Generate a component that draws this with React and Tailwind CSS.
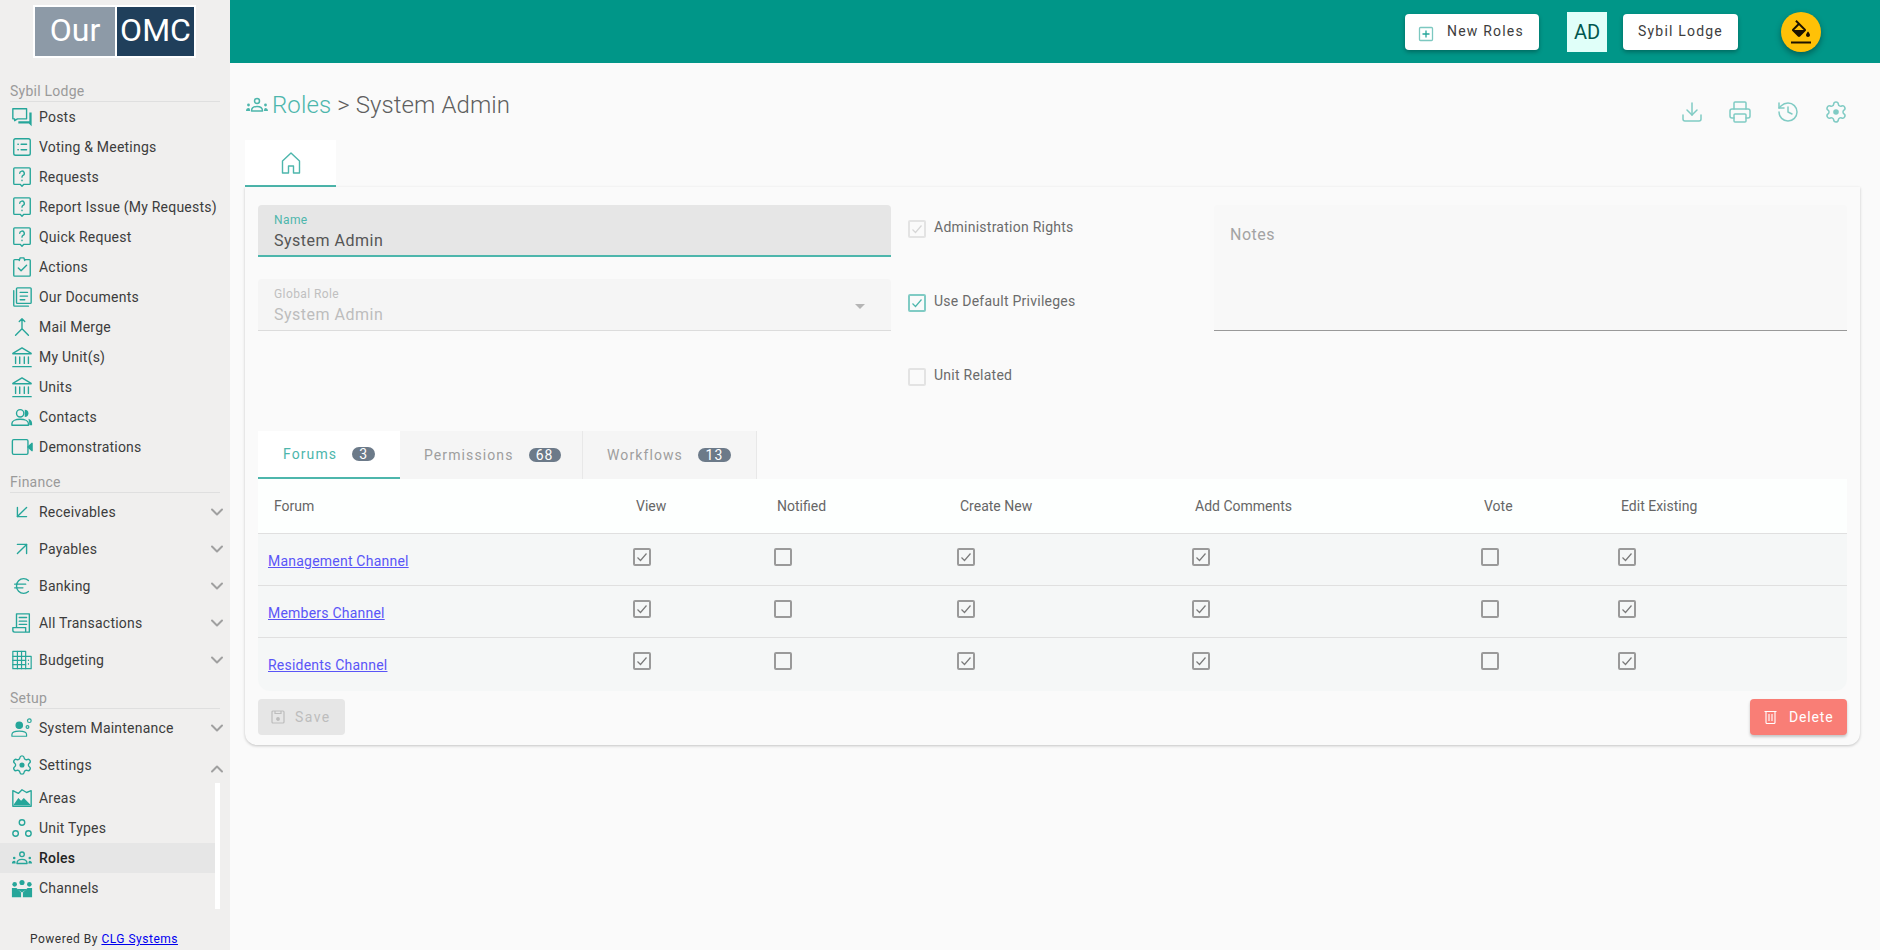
import React from "react";
import { ArrowDownLeft, ArrowUpRight, Euro, ChevronDown, ChevronUp, Download, Printer, History } from "lucide-react";

const S = ({ children, size = 22, sw = 1.5, className = "text-[#26a69a]" }) => (
  <svg width={size} height={size} viewBox="0 0 24 24" fill="none" stroke="currentColor" strokeWidth={sw} strokeLinecap="round" strokeLinejoin="round" className={className}>
    {children}
  </svg>
);

const Posts = () => (
  <S>
    <path d="M2 3h15v11H7l-3 2v-2H2z" />
    <path d="M20 7h2.500v15l-3-3H8v-2.500h12z" fill="currentColor" stroke="none" />
  </S>
);
const Voting = () => (
  <S>
    <rect x="3" y="3" width="18" height="18" rx="2" />
    <path d="M7.500 9h.5M7.500 15h.5M11 9h6M11 15h6" />
  </S>
);
const Ques = () => (
  <S>
    <path d="M4 2h16a1 1 0 0 1 1 1v16a1 1 0 0 1-1 1h-6l-2 2-2-2H4a1 1 0 0 1-1-1V3a1 1 0 0 1 1-1z" />
    <path d="M9.500 8a2.500 2.500 0 1 1 3.500 2.300c-.7.4-1 1-1 1.900M12 15.500v.5" />
  </S>
);
const Actions = () => (
  <S>
    <path d="M9 4H4a1 1 0 0 0-1 1v16a1 1 0 0 0 1 1h16a1 1 0 0 0 1-1V5a1 1 0 0 0-1-1h-5" />
    <path d="M9 5l1-3h4l1 3" />
    <path d="M8 13l3 3 6-6" />
  </S>
);
const Docs = () => (
  <S>
    <rect x="6" y="2" width="16" height="17" rx="1" />
    <path d="M3 5v16a1 1 0 0 0 1 1h15M10 7h8M10 11h8M10 15h5" />
  </S>
);
const Merge = () => (
  <S>
    <path d="M12 3v11M9 6l3-3 3 3M12 14l-7 7M12 14l7 7" />
  </S>
);
const Bank = () => (
  <S>
    <path d="M2 8l10-6 10 6M2 8.500h20M5 12v7M9.500 12v7M14.500 12v7M19 12v7M2 22.500h20" />
  </S>
);
const Contacts = () => (
  <S>
    <circle cx="10" cy="8" r="4" />
    <path d="M1 21v-2c0-2.500 3.500-4.500 9-4.500s9 2 9 4.500v2z" />
    <path d="M15 4a4 4 0 0 1 0 8z" fill="currentColor" stroke="none" />
    <path d="M19 14c2.500.7 4 2.500 4 5v2h-3c0-3-.500-5-1-7z" fill="currentColor" stroke="none" />
  </S>
);
const Video = () => (
  <S>
    <rect x="1.500" y="4" width="17" height="16" rx="1.500" />
    <path d="M18.500 12L23 8v8z" fill="currentColor" />
  </S>
);
const Receipt = () => (
  <S>
    <path d="M6 2h14v20H4a2 2 0 0 1-2-2v-3h14v5M9 6h8M9 10h8M9 13.500h8M6 2v15" />
  </S>
);
const Budget = () => (
  <S sw={1.3}>
    <rect x="2" y="2.500" width="14" height="19" />
    <path d="M16 8h6v13.500h-6M2 8h14M2 12.500h14M2 17h14M7 2.500v19M11.500 2.500v19M19 12v.5M19 16v.5" />
  </S>
);
const Maint = () => (
  <S sw={1.3}>
    <circle cx="9" cy="9" r="3.500" fill="currentColor" />
    <path d="M1 21v-2c0-2 3-3.500 8-3.500s8 1.500 8 3.500v2z" />
    <circle cx="20" cy="4" r="2" />
    <circle cx="18" cy="11" r="1.500" />
  </S>
);
const Gear = ({ size = 22, className, sw = 1.5 }) => (
  <S size={size} sw={sw} className={className}>
    <path d="M9.671 4.136a2.34 2.34 0 0 1 4.659 0 2.34 2.34 0 0 0 3.319 1.915 2.34 2.34 0 0 1 2.33 4.033 2.34 2.34 0 0 0 0 3.831 2.34 2.34 0 0 1-2.33 4.033 2.34 2.34 0 0 0-3.319 1.915 2.34 2.34 0 0 1-4.659 0 2.34 2.34 0 0 0-3.32-1.915 2.34 2.34 0 0 1-2.33-4.033 2.34 2.34 0 0 0 0-3.831A2.34 2.34 0 0 1 6.35 6.051a2.34 2.34 0 0 0 3.319-1.915" />
    <circle cx="12" cy="12" r="2.800" fill="currentColor" stroke="none" />
  </S>
);
const Area = () => (
  <S>
    <path d="M2 4l6 3 4-4 5 3 5-2v17H2z" />
    <path d="M3 19l5-7 3 3 3-3 7 7v1H3z" fill="currentColor" stroke="none" />
  </S>
);
const UnitTypes = () => (
  <S>
    <circle cx="12" cy="6" r="3" />
    <circle cx="5" cy="18" r="3" />
    <circle cx="19" cy="18" r="3" />
  </S>
);
const Roles = ({ size = 24, className }) => (
  <S size={size} sw={1.5} className={className}>
    <circle cx="12" cy="8" r="2.500" />
    <path d="M6.500 18c0-3 2-4.500 5.500-4.500s5.500 1.500 5.500 4.500z" />
    <circle cx="3.500" cy="12" r="1.400" fill="currentColor" stroke="none" />
    <circle cx="20.500" cy="12" r="1.400" fill="currentColor" stroke="none" />
    <path d="M1 18c0-2 1-3 2.500-3S5 16 5 18zM19 18c0-2 .5-3 1.500-3s2.500 1 2.500 3z" fill="currentColor" stroke="none" />
  </S>
);
const Channels = () => (
  <S>
    <g fill="currentColor" stroke="none">
      <circle cx="12" cy="6" r="2.800" />
      <circle cx="4" cy="8" r="2.500" />
      <circle cx="20" cy="8" r="2.500" />
      <path d="M7.500 13h9v1l-4.500 3-4.500-3z" />
      <path d="M1 12h5l5 5v5H1zM23 12h-5l-5 5v5h10z" />
    </g>
  </S>
);

const Item = ({ icon, label, active, caret, tall }) => (
  <div className={`flex items-center pl-[11px] relative ${tall ? "h-[37px] pt-[1px]" : "h-[30px]"} ${active ? "bg-[#e6e6e6] font-medium text-[#222]" : "text-[#3c3c3c]"}`}>
    <span className="w-[22px] h-[22px] flex items-center justify-center shrink-0">{icon}</span>
    <span className="ml-[6px] text-[14px] tracking-[0.22px] whitespace-nowrap">{label}</span>
    {caret === "down" && <ChevronDown size={20} strokeWidth={2.4} className="absolute left-[207px] top-[9px] text-[#a0a0a0]" />}
    {caret === "up" && <ChevronUp size={20} strokeWidth={2.4} className="absolute left-[207px] top-[13px] text-[#a0a0a0]" />}
  </div>
);

const Section = ({ title, className }) => (
  <div className={`mx-[10px] h-[21px] border-b border-[#dfdfdf] text-[14px] tracking-[0.25px] leading-[20px] text-[#9a9a9a] ${className}`}>{title}</div>
);

const Sidebar = () => (
  <aside className="w-[230px] shrink-0 bg-[#f0efee] flex flex-col h-[950px]">
    <div className="h-[63px] pt-[5px] pl-[33px]">
      <div className="w-[163px] h-[53px] bg-white p-[2px] flex gap-[2px]">
        <div className="w-[80px] bg-[#8d9aa7] text-white text-[32px] leading-[46px] text-center">Our</div>
        <div className="flex-1 bg-[#203f5b] text-white text-[32px] leading-[46px] text-center">OMC</div>
      </div>
    </div>
    <Section title="Sybil Lodge" className="mt-[18px]" />
    <Item icon={<Posts />} label="Posts" />
    <Item icon={<Voting />} label="Voting & Meetings" />
    <Item icon={<Ques />} label="Requests" />
    <Item icon={<Ques />} label="Report Issue (My Requests)" />
    <Item icon={<Ques />} label="Quick Request" />
    <Item icon={<Actions />} label="Actions" />
    <Item icon={<Docs />} label="Our Documents" />
    <Item icon={<Merge />} label="Mail Merge" />
    <Item icon={<Bank />} label="My Unit(s)" />
    <Item icon={<Bank />} label="Units" />
    <Item icon={<Contacts />} label="Contacts" />
    <Item icon={<Video />} label="Demonstrations" />
    <Section title="Finance" className="mt-[10px]" />
    <Item tall caret="down" icon={<ArrowDownLeft size={24} strokeWidth={1.5} className="text-[#26a69a]" />} label="Receivables" />
    <Item tall caret="down" icon={<ArrowUpRight size={24} strokeWidth={1.5} className="text-[#26a69a]" />} label="Payables" />
    <Item tall caret="down" icon={<Euro size={24} strokeWidth={1.5} className="text-[#26a69a]" />} label="Banking" />
    <Item tall caret="down" icon={<Receipt />} label="All Transactions" />
    <Item tall caret="down" icon={<Budget />} label="Budgeting" />
    <Section title="Setup" className="mt-[10px]" />
    <Item tall caret="down" icon={<Maint />} label="System Maintenance" />
    <Item tall caret="up" icon={<Gear />} label="Settings" />
    <div className="w-[220px] h-[126px] border-r-[5px] border-white">
      <Item icon={<Area />} label="Areas" />
      <Item icon={<UnitTypes />} label="Unit Types" />
      <Item active icon={<Roles />} label="Roles" />
      <Item icon={<Channels />} label="Channels" />
    </div>
    <div className="mt-[21px] pl-[30px] text-[12px] leading-[18px] tracking-[0.5px] text-[#333]">
      Powered By <a href="#" className="text-[#0000ee] underline">CLG Systems</a>
    </div>
  </aside>
);

const Btn = ({ children, className = "" }) => (
  <div className={`h-[36px] bg-white rounded-[4px] shadow-[0_2px_4px_rgba(0,0,0,0.3)] flex items-center text-[14px] tracking-[1.2px] text-[#3d3d3d] ${className}`}>{children}</div>
);

const Header = () => (
  <header className="h-[63px] bg-[#009688] flex items-center justify-end pr-[59px]">
    <Btn className="w-[134px]">
      <svg width="16" height="16" viewBox="0 0 16 16" fill="none" stroke="#7cc8c0" strokeWidth="1.300" className="ml-[13px] mt-[5px]">
        <rect x="1.500" y="1.500" width="13" height="13" rx="1" />
        <path d="M8 4.500v7M4.500 8h7" stroke="#26a69a" />
      </svg>
      <span className="ml-[13px]">New Roles</span>
    </Btn>
    <div className="ml-[28px] w-[40px] h-[40px] bg-[#e0fff9] flex items-center justify-center text-[20px] text-[#00574f] mt-[1px]">AD</div>
    <Btn className="ml-[16px] w-[115px] justify-center">Sybil Lodge</Btn>
    <div className="ml-[43px] w-[40px] h-[40px] rounded-full bg-[#ffc107] shadow-[0_3px_6px_rgba(0,0,0,0.35)] flex items-center justify-center">
      <svg width="24" height="24" viewBox="0 0 24 24" fill="#1c1200" fillRule="evenodd">
        <path d="M16.560 8.940L7.620 0 6.210 1.410l2.380 2.380-5.150 5.150c-.59.59-.59 1.540 0 2.120l5.500 5.500c.29.29.68.44 1.060.44s.77-.15 1.060-.44l5.500-5.500c.59-.58.59-1.530 0-2.120zM5.210 10L10 5.210 14.790 10H5.210z" />
        <path d="M19 11.500s-2 2.170-2 3.500c0 1.100.9 2 2 2s2-.9 2-2c0-1.330-2-3.500-2-3.500zM2 21.500h20v2H2z" />
      </svg>
    </div>
  </header>
);

const Check = ({ on, tone = "grid" }) => {
  const cls =
    tone === "grid"
      ? "border-[#9a9a9a] text-[#7a7a7a]"
      : tone === "teal"
      ? "border-[#80cbc4] text-[#4db6ac]"
      : "border-[#e3e3e3] text-[#d6d6d6]";
  return (
    <span className={`w-[18px] h-[18px] shrink-0 rounded-[2px] border-2 flex items-center justify-center ${cls}`}>
      {on && (
        <svg width="12" height="12" viewBox="0 0 12 12" fill="none" stroke="currentColor" strokeWidth="1.200">
          <path d="M1.500 6.500l3 3 6-7" />
        </svg>
      )}
    </span>
  );
};

const Option = ({ label, on, tone }) => (
  <div className="h-[18px] flex gap-[8px] items-start">
    <Check on={on} tone={tone} />
    <span className="text-[14px] tracking-[0.25px] leading-[14px] text-[#6b6b6b] whitespace-nowrap">{label}</span>
  </div>
);

const cols = "grid grid-cols-[367px_141px_183px_235px_289px_137px_237px]";
const heads = ["Forum", "View", "Notified", "Create New", "Add Comments", "Vote", "Edit Existing"];
const rows = [
  ["Management Channel", 1, 0, 1, 1, 0, 1],
  ["Members Channel", 1, 0, 1, 1, 0, 1],
  ["Residents Channel", 1, 0, 1, 1, 0, 1],
];

const Table = () => (
  <div>
    <div className={`${cols} h-[55px] bg-[#fdfffe] border-b border-[#e0e0e0] items-center text-[14px] text-[#666]`}>
      {heads.map((h, i) => (
        <div key={h} className={i === 0 ? "pl-[16px]" : "pl-[11px]"}>{h}</div>
      ))}
    </div>
    {rows.map((r, ri) => (
      <div key={r[0]} className={`${cols} ${ri < 2 ? "h-[52px] border-b border-[#e0e0e0]" : "h-[53px] rounded-b-[12px]"} bg-[#f5f7f7]`}>
        <div className="pl-[10px] pt-[18px] leading-[18px]">
          <a href="#" className="text-[14px] tracking-[0.22px] text-[#5a55f7] underline">{r[0]}</a>
        </div>
        {r.slice(1).map((v, i) => (
          <div key={i} className="pl-[8px] pt-[14px]">
            <Check on={!!v} />
          </div>
        ))}
      </div>
    ))}
  </div>
);

const Tab = ({ label, n, active, className, bw, gap, ml }) => (
  <div className={`h-[48px] flex items-center ${className} ${active ? "bg-white border-b-2 border-[#4db6ac] text-[#4db6ac]" : "bg-[#f5f5f5] border-r border-[#e8e8e8] text-[#9e9e9e]"}`}>
    <span className={`text-[14px] tracking-[1.1px] ${ml}`}>{label}</span>
    <span className={`${gap} h-[14px] ${bw} rounded-full bg-[#6c7a89] text-white text-[14px] leading-[14px] tracking-[1px] text-center`}>{n}</span>
  </div>
);

const Main = () => (
  <main className="flex-1 bg-[#fafafa] min-w-0 h-[950px] overflow-hidden">
    <Header />
    <div className="h-[77px] flex pl-[15px] pr-[32px]">
      <div className="flex items-center h-[52px] mt-[16px] text-[24px] font-light leading-[34px]">
        <Roles size={24} className="text-[#4db6ac]" />
        <span className="text-[#4db6ac] ml-[3px] tracking-[0.1px]">Roles</span>
        <span className="text-[#5f5f5f] ml-[6px] tracking-[0.1px]">&gt; System Admin</span>
      </div>
      <div className="ml-auto flex gap-[24px] pt-[37px] text-[#80cbc4] h-fit">
        <Download size={24} strokeWidth={1.5} />
        <Printer size={24} strokeWidth={1.5} />
        <History size={24} strokeWidth={1.5} />
        <Gear size={24} className="text-[#80cbc4]" />
      </div>
    </div>
    <div className="ml-[15px] w-[1615px]">
      <div className="w-[91px] h-[47px] bg-white border-b-2 border-[#4db6ac] flex items-center justify-center">
        <S size={24} sw={1.4} className="text-[#4db6ac]">
          <path d="M3.500 22V10L12 2l8.500 8v12h-6v-7h-5v7z" />
        </S>
      </div>
      <div className="bg-[#fafafa] rounded-b-[12px] shadow-[0_1px_3px_rgba(0,0,0,0.22)] pt-[18px] pl-[13px] pr-[13px] pb-[10px]">
        <div className="flex h-[226px]">
          <div className="w-[633px] flex flex-col gap-[22px]">
            <div className="h-[52px] bg-[#e6e6e6] rounded-t-[4px] border-b-2 border-[#4db6ac] pl-[16px] pt-[7px]">
              <div className="text-[12px] leading-[16px] tracking-[0.4px] text-[#4db6ac]">Name</div>
              <div className="text-[16px] leading-[20px] mt-[3px] tracking-[0.5px] text-[#555]">System Admin</div>
            </div>
            <div className="relative h-[52px] bg-[#f5f5f5] rounded-t-[4px] border-b border-[#dcdcdc] pl-[16px] pt-[7px]">
              <div className="text-[12px] leading-[16px] tracking-[0.4px] text-[#c0c0c0]">Global Role</div>
              <div className="text-[16px] leading-[20px] mt-[3px] tracking-[0.5px] text-[#bdbdbd]">System Admin</div>
              <span className="absolute left-[597px] top-[25px] w-0 h-0 border-x-[5px] border-x-transparent border-t-[5px] border-t-[#b5b5b5]" />
            </div>
          </div>
          <div className="w-[323px] pl-[17px] pt-[15px] flex flex-col gap-[56px]">
            <Option label="Administration Rights" on tone="off" />
            <Option label="Use Default Privileges" on tone="teal" />
            <Option label="Unit Related" tone="off" />
          </div>
          <div className="w-[633px] h-[126px] bg-[#f8f8f8] rounded-t-[4px] border-b border-[#999] pl-[16px] pt-[20px] text-[16px] leading-[20px] tracking-[0.5px] text-[#a3a3a3]">Notes</div>
        </div>
        <div className="flex">
          <Tab active label="Forums" n="3" className="w-[142px]" bw="w-[23px]" gap="ml-[15px]" ml="ml-[25px]" />
          <Tab label="Permissions" n="68" className="w-[183px]" bw="w-[32px]" gap="ml-[15px]" ml="ml-[24px]" />
          <Tab label="Workflows" n="13" className="w-[174px]" bw="w-[33px]" gap="ml-[15px]" ml="ml-[24px]" />
        </div>
        <Table />
        <div className="flex justify-between mt-[8px]">
          <div className="w-[87px] h-[36px] rounded-[4px] bg-[#e6e6e6] text-[#bdbdbd] flex items-center pl-[12px] gap-[9px] text-[14px] tracking-[1.4px]">
            <svg width="16" height="16" viewBox="0 0 16 16" fill="none" stroke="currentColor" strokeWidth="1.200">
              <path d="M3 2h10a1 1 0 0 1 1 1v10a1 1 0 0 1-1 1H3a1 1 0 0 1-1-1V3a1 1 0 0 1 1-1z" />
              <path d="M5 2v2.500h6V2" />
              <circle cx="8" cy="10" r="1.300" fill="currentColor" />
            </svg>
            Save
          </div>
          <div className="w-[97px] h-[36px] rounded-[4px] bg-[#f97e76] text-white flex items-center pl-[14px] gap-[12px] text-[14px] tracking-[0.85px] shadow-[0_2px_3px_rgba(0,0,0,0.22)]">
            <svg width="13" height="14" viewBox="0 0 13 14" fill="none" stroke="currentColor" strokeWidth="1.100">
              <path d="M.5 1.500h12M2 1.500v11a1 1 0 0 0 1 1h7a1 1 0 0 0 1-1v-11M5 4v7M8 4v7" />
            </svg>
            Delete
          </div>
        </div>
      </div>
    </div>
  </main>
);

export default function App() {
  return (
    <div className="flex w-[1880px] h-[950px] overflow-hidden font-['Roboto',sans-serif]">
      <Sidebar />
      <Main />
    </div>
  );
}
